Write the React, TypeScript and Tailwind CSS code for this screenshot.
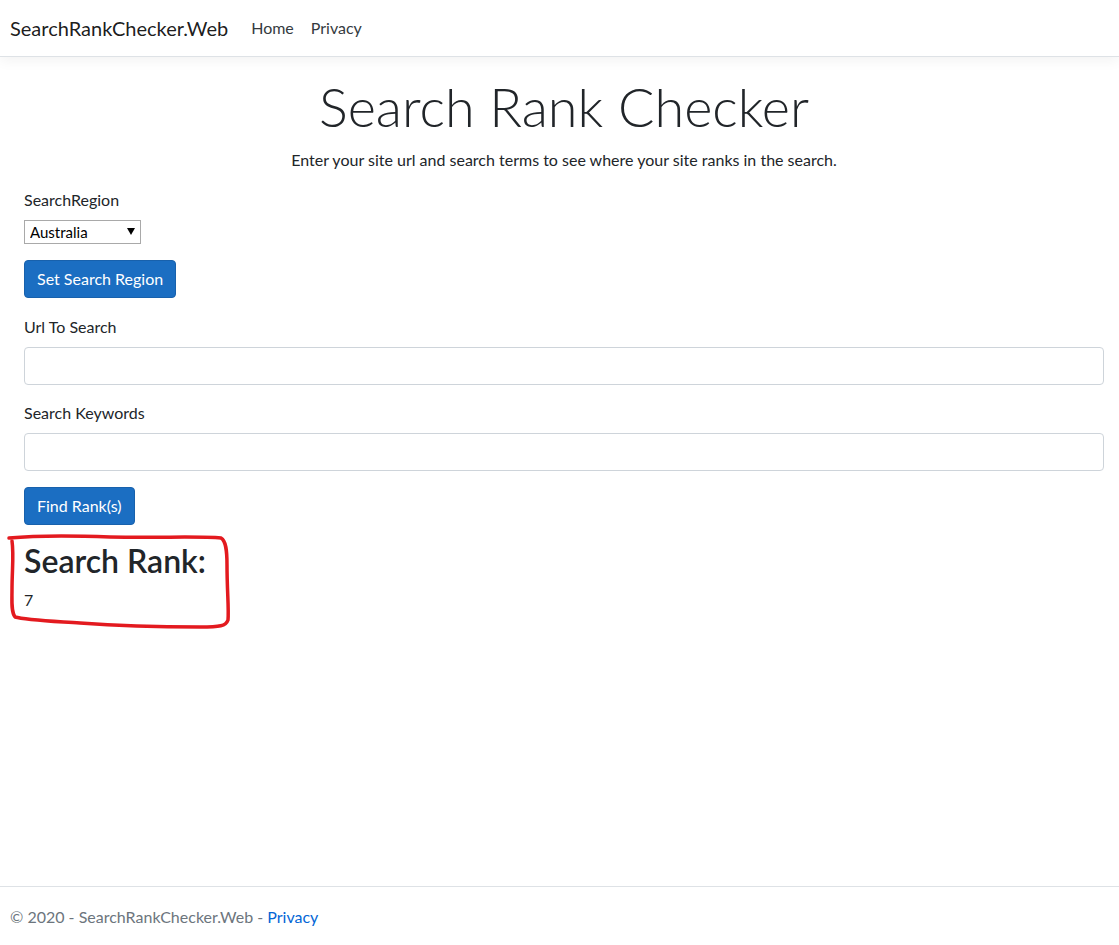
import React from "react"

const font = { fontFamily: '"Segoe UI", Lato, "Liberation Sans", sans-serif' }

function Field({ label }: { label: string }) {
    return (
        <div className="mb-4">
            <label className="mb-2 block leading-6">{label}</label>
            <input
                type="text"
                className="block h-[38px] w-full rounded-[4px] border border-[#ced4da] bg-white px-3 outline-none"
            />
        </div>
    )
}

function PrimaryButton({ children }: { children: React.ReactNode }) {
    return (
        <button className="h-[38px] rounded-[4px] border border-[#1861ac] bg-[#1b6ec2] px-3 leading-6 text-white">
            {children}
        </button>
    )
}

export default function App() {
    return (
        <div className="relative flex min-h-[945px] flex-col bg-white text-[16px] text-[#212529]" style={font}>
            {/* top navbar */}
            <header className="mb-4 flex h-[57px] items-center border-b border-[#dee2e6] bg-white px-[10px] shadow-[0_4px_12px_rgba(0,0,0,0.05)]">
                <a className="mr-[23px] text-[20px] leading-[30px] text-black/90">SearchRankChecker.Web</a>
                <nav className="flex gap-[17px] text-[#343a40]">
                    <a>Home</a>
                    <a>Privacy</a>
                </nav>
            </header>

            <main className="pl-[24px] pr-[15px]">
                <div className="text-center">
                    <h1 className="mb-2 text-[54px] font-light leading-[67px]">Search Rank Checker</h1>
                    <p className="mb-4 leading-6">
                        Enter your site url and search terms to see where your site ranks in the search.
                    </p>
                </div>

                <div className="mb-4">
                    <label className="mb-2 block leading-6">SearchRegion</label>
                    <div className="relative inline-block">
                        <select className="block h-[24px] w-[117px] appearance-none border border-[#a9a9a9] bg-white pl-[5px] text-[15px] text-black outline-none">
                            <option>Australia</option>
                        </select>
                        <svg className="pointer-events-none absolute right-[6px] top-[8px]" width="8" height="7" viewBox="0 0 8 7">
                            <path d="M0 0 H8 L4 7 Z" fill="#000" />
                        </svg>
                    </div>
                </div>
                <div className="mb-[17px]">
                    <PrimaryButton>Set Search Region</PrimaryButton>
                </div>

                <Field label="Url To Search" />
                <Field label="Search Keywords" />
                <PrimaryButton>Find Rank(s)</PrimaryButton>

                <h2 className="mb-2 mt-[17px] text-[32px] font-semibold leading-[1.2]">Search Rank:</h2>
                <div className="leading-6">7</div>
            </main>

            <footer className="mt-auto h-[59px] border-t border-[#dee2e6] px-[10px] pt-[1px] leading-[58px] text-[#6c757d]">
                © 2020 - SearchRankChecker.Web - <a className="text-[#0366d6]">Privacy</a>
            </footer>

            {/* red hand-drawn annotation */}
            <svg className="pointer-events-none absolute left-0 top-0" width="1119" height="945">
                <path
                    d="M9 538 C30 536 60 535 110 537 C160 538 200 536 221 538 C226 541 227 550 227 565 C227 590 229 610 228 620 C226 626 220 627 200 627 C160 627 120 626 80 623 C50 621 25 620 15 617 C11 612 12 600 12 590 C12 570 14 555 12 541"
                    fill="none"
                    stroke="#e31a1f"
                    strokeWidth="3.5"
                    strokeLinecap="round"
                    strokeLinejoin="round"
                />
            </svg>
        </div>
    )
}
